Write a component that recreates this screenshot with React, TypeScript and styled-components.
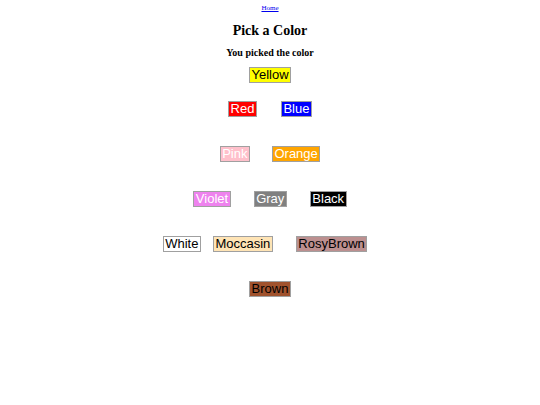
import React from "react";
import styled, { createGlobalStyle } from "styled-components";

const Global = createGlobalStyle`
  html, body { margin: 0; padding: 0; background: #fff; }
  body { font-family: "Liberation Serif", "Times New Roman", serif; }
`;

const Page = styled.div`
  display: flex;
  flex-direction: column;
  align-items: center;
  padding-top: 4px;
`;

const HomeLink = styled.a`
  font-size: 7px;
  line-height: 9px;
  color: #0000ee;
  text-decoration: underline;
`;

const Title = styled.h1`
  margin: 9px 0 0;
  font-size: 14px;
  line-height: 18px;
  font-weight: bold;
  color: #000;
`;

const Subtitle = styled.h3`
  margin: 6px 0 0;
  font-size: 10px;
  line-height: 13px;
  font-weight: bold;
  color: #000;
`;

const Rows = styled.div`
  display: flex;
  flex-direction: column;
  align-items: center;
  margin-top: 8px;
`;

const Row = styled.div<{ $gap: number; $top: number; $shift?: number }>`
  display: flex;
  justify-content: center;
  gap: ${(p) => p.$gap}px;
  margin-top: ${(p) => p.$top}px;
  margin-right: ${(p) => (p.$shift ?? 0) * 2}px;
`;

const ColorButton = styled.button<{ $bg: string; $fg: string; $after?: number }>`
  font-family: "Liberation Sans", Arial, sans-serif;
  font-size: 13px;
  line-height: 14px;
  height: 16px;
  padding: 0 1.5px;
  margin: 0 ${(p) => p.$after ?? 0}px 0 0;
  border: 1px solid #a0a0a0;
  border-radius: 0;
  background: ${(p) => p.$bg};
  color: ${(p) => p.$fg};
  cursor: pointer;
`;

type C = { name: string; bg: string; fg: string; after?: number };

const rows: { gap: number; top: number; shift?: number; items: C[] }[] = [
  { gap: 0, top: 0, items: [{ name: "Yellow", bg: "#ffff00", fg: "#000" }] },
  {
    gap: 24,
    top: 18,
    items: [
      { name: "Red", bg: "#ff0000", fg: "#fff" },
      { name: "Blue", bg: "#0000ff", fg: "#fff" },
    ],
  },
  {
    gap: 22,
    top: 29,
    items: [
      { name: "Pink", bg: "#ffc0cb", fg: "#fff" },
      { name: "Orange", bg: "#ffa500", fg: "#fff" },
    ],
  },
  {
    gap: 23,
    top: 29,
    items: [
      { name: "Violet", bg: "#ee82ee", fg: "#fff" },
      { name: "Gray", bg: "#808080", fg: "#fff" },
      { name: "Black", bg: "#000000", fg: "#fff" },
    ],
  },
  {
    gap: 12,
    top: 29,
    shift: 5,
    items: [
      { name: "White", bg: "#ffffff", fg: "#000" },
      { name: "Moccasin", bg: "#ffe4b5", fg: "#000", after: 11 },
      { name: "RosyBrown", bg: "#bc8f8f", fg: "#000" },
    ],
  },
  { gap: 0, top: 29, items: [{ name: "Brown", bg: "#a0522d", fg: "#000" }] },
];

export default function App() {
  return (
    <Page>
      <Global />
      <HomeLink href="#">Home</HomeLink>
      <Title>Pick a Color</Title>
      <Subtitle>You picked the color</Subtitle>
      <Rows>
        {rows.map((r, i) => (
          <Row key={i} $gap={r.gap} $top={r.top} $shift={r.shift}>
            {r.items.map((c) => (
              <ColorButton key={c.name} $bg={c.bg} $fg={c.fg} $after={c.after}>
                {c.name}
              </ColorButton>
            ))}
          </Row>
        ))}
      </Rows>
    </Page>
  );
}
